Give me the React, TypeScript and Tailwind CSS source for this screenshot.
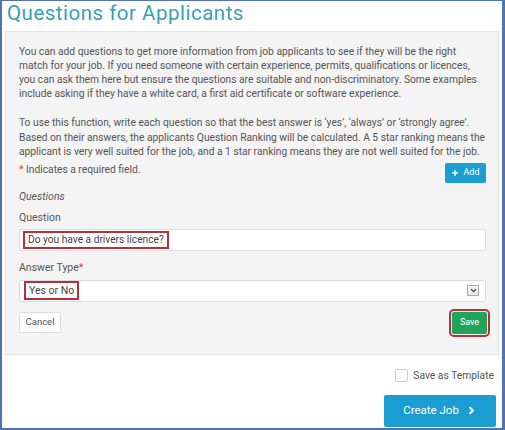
import { ChevronRight, ChevronDown, Plus } from "lucide-react";

export default function App() {
  return (
    <div className="w-[505px] h-[430px] bg-white border-t border-l-2 border-r-[3px] border-b-2 border-[#4f73b6] font-['Roboto',sans-serif] flex flex-col">
      <h1 className="text-[20.5px] leading-[24px] tracking-[0.5px] text-[#3aa0b6] pl-[5px]">
        Questions for Applicants
      </h1>

      <div className="mx-[3px] mt-[6px] bg-[#f4f4f4] border border-[#e4e4e4] pl-[13px] pr-[12px] pt-[13px] pb-[20px] text-[#555]">
        <p className="text-[10.25px] leading-[14px] whitespace-nowrap">
          You can add questions to get more information from job applicants to see if they will be the right
          <br />
          match for your job. If you need someone with certain experience, permits, qualifications or licences,
          <br />
          you can ask them here but ensure the questions are suitable and non-discriminatory. Some examples
          <br />
          include asking if they have a white card, a first aid certificate or software experience.
        </p>
        <p className="mt-[15px] text-[10.25px] leading-[14.5px] whitespace-nowrap">
          To use this function, write each question so that the best answer is ‘yes’, ‘always’ or ‘strongly agree’.
          <br />
          Based on their answers, the applicants Question Ranking will be calculated. A 5 star ranking means the
          <br />
          applicant is very well suited for the job, and a 1 star ranking means they are not well suited for the job.
        </p>

        <div className="mt-[1px] flex items-start justify-between">
          <span className="mt-[2px] text-[10.25px] leading-[14px]">
            <span className="text-[#d0393e]">*</span> Indicates a required field.
          </span>
          <button className="mt-[2px] h-[20px] w-[41px] bg-[#1a9fd0] rounded-[2px] text-white text-[9px] flex items-center justify-center gap-[4px]">
            <Plus size={8} strokeWidth={4.5} />
            Add
          </button>
        </div>

        <div className="mt-[7px] text-[10.5px] leading-[14px] italic">Questions</div>
        <div className="mt-[7px] text-[10.5px] leading-[14px]">Question</div>
        <div className="mt-[4px] h-[22px] bg-white border border-[#ddd] rounded-[2px] flex items-center pl-[3px]">
          <span className="border-2 border-[#b3303c] px-[3px] text-[10.2px] leading-[14px] text-[#444]">
            Do you have a drivers licence?
          </span>
        </div>

        <div className="mt-[10px] text-[10.5px] leading-[14px]">
          Answer Type<span className="text-[#d0393e]">*</span>
        </div>
        <div className="mt-[5px] h-[22px] bg-white border border-[#ddd] rounded-[2px] flex items-center justify-between pl-[4px] pr-[6px]">
          <span className="border-2 border-[#b3303c] px-[3px] text-[10.5px] leading-[15px] text-[#444]">
            Yes or No
          </span>
          <span className="w-[12px] h-[11px] border border-[#aaa] bg-gradient-to-b from-[#fafafa] to-[#e4e4e4] flex items-center justify-center text-[#333]">
            <ChevronDown size={9} strokeWidth={3} />
          </span>
        </div>

        <div className="mt-[10px] flex items-center justify-between">
          <button className="h-[21px] w-[42px] bg-white border border-[#ddd] rounded-[2px] text-[9.5px] text-[#555]">
            Cancel
          </button>
          <button className="mr-[-1px] h-[22px] w-[35px] bg-[#1fa55a] rounded-[2px] text-[9px] text-white outline-2 outline-offset-1 outline-[#b3303c]">
            Save
          </button>
        </div>
      </div>

      <div className="mt-[14px] mr-[8px] flex items-center justify-end gap-[5px]">
        <span className="w-[13px] h-[13px] bg-white border border-[#ccc] rounded-[2px]" />
        <span className="text-[10.3px] leading-[14px] text-[#555]">Save as Template</span>
      </div>

      <div className="mt-[12px] mr-[6px] flex justify-end">
        <button className="w-[112px] h-[32px] bg-[#1a9ed2] rounded-[2px] text-white text-[11.5px] flex items-center justify-center gap-[7px]">
          Create Job
          <ChevronRight size={11} strokeWidth={4.5} />
        </button>
      </div>
    </div>
  );
}
